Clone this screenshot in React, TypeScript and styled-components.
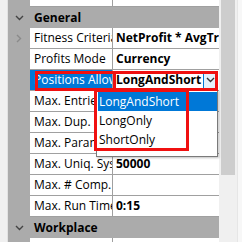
import styled, { createGlobalStyle } from 'styled-components';

const GlobalStyle = createGlobalStyle`
  html, body {
    margin: 0;
    padding: 0;
    background: #f0f0f0;
  }
`;

const Page = styled.div`
  position: relative;
  display: flex;
  width: 242px;
  height: 242px;
  overflow: hidden;
  background: #f0f0f0;
  font-family: 'Open Sans', 'Liberation Sans', sans-serif;
  font-size: 12px;
  color: #000;
`;

const LeftEdge = styled.div`
  width: 7px;
  flex: none;
  background: #f0f0f0;
  border-right: 1px solid #e2e2e2;
`;

const Grid = styled.div`
  width: 211px;
  flex: none;
  margin-top: -14px;
  display: flex;
  flex-direction: column;
  background: #ababab;
`;

const Row = styled.div`
  display: flex;
  height: 21px;
  flex: none;
`;

const Gutter = styled.div`
  width: 22px;
  flex: none;
  display: flex;
  align-items: center;
  justify-content: center;
  background: #ababab;
`;

const Cells = styled.div`
  flex: 1;
  display: flex;
  min-width: 0;
  background: #fff;
  border-bottom: 1px solid #a0a0a0;
`;

const Name = styled.div<{ $selected?: boolean }>`
  width: 83px;
  flex: none;
  padding-left: 4px;
  box-sizing: border-box;
  line-height: 20px;
  white-space: nowrap;
  overflow: hidden;
  border-right: 1px solid #a0a0a0;
  background: ${p => (p.$selected ? '#0078d7' : '#fff')};
  color: ${p => (p.$selected ? '#fff' : '#000')};
`;

const Value = styled.div`
  flex: 1;
  min-width: 0;
  display: flex;
  align-items: center;
  padding-left: 3px;
  font-weight: 700;
  line-height: 20px;
  white-space: nowrap;
  overflow: hidden;
`;

const ValueText = styled.span`
  flex: 1;
  overflow: hidden;
`;

const DropButton = styled.div`
  width: 12px;
  height: 17px;
  margin-right: 2px;
  flex: none;
  display: flex;
  align-items: center;
  justify-content: center;
  background: #e5f1fb;
  border: 1px solid #0078d7;
`;

const Category = styled.div`
  flex: 1;
  padding-left: 4px;
  line-height: 21px;
  font-weight: 700;
  background: #ababab;
`;

const Scrollbar = styled.div`
  width: 18px;
  flex: none;
  padding: 0 2px;
  box-sizing: border-box;
  background: #f0f0f0;
`;

const Thumb = styled.div`
  height: 175px;
  background: #cdcdcd;
`;

const RightEdge = styled.div`
  flex: 1;
  background: #f7f7f7;
  border-left: 1px solid #e6e6e6;
`;

const Popup = styled.div`
  position: absolute;
  left: 96px;
  top: 90px;
  width: 122px;
  height: 67px;
  box-sizing: border-box;
  padding: 1px 0 0 1px;
  background: #fff;
  border: 1px solid #7a7a7a;
  box-shadow: 1px 1px 2px rgba(0, 0, 0, 0.25);
`;

const Item = styled.div<{ $active?: boolean }>`
  height: 19px;
  line-height: 19px;
  padding-left: 1px;
  background: ${p => (p.$active ? '#0078d7' : 'transparent')};
  color: ${p => (p.$active ? '#fff' : '#000')};
`;

const Marker = styled.div<{ $x: number; $y: number; $w: number; $h: number }>`
  position: absolute;
  left: ${p => p.$x}px;
  top: ${p => p.$y}px;
  width: ${p => p.$w}px;
  height: ${p => p.$h}px;
  box-sizing: border-box;
  border: 3px solid #f01010;
  pointer-events: none;
`;

const ChevronDown = ({ color = '#444' }: { color?: string }) => (
  <svg width="9" height="6" viewBox="0 0 9 6">
    <path d="M1 1 L4.5 4.5 L8 1" fill="none" stroke={color} strokeWidth="1.4" />
  </svg>
);

const ChevronRight = () => (
  <svg width="6" height="9" viewBox="0 0 6 9">
    <path d="M1 1 L4.5 4.5 L1 8" fill="none" stroke="#8a8a8a" strokeWidth="1.4" />
  </svg>
);

type Prop = { name: string; value?: string; expandable?: boolean };

const generalProps: Prop[] = [
  { name: 'Fitness Criteria', value: 'NetProfit * AvgTrade', expandable: true },
  { name: 'Profits Mode', value: 'Currency' },
];

// values of the first three rows sit under the open drop-down list
const limitProps: Prop[] = [
  { name: 'Max. Entries per Day' },
  { name: 'Max. Dup. Systems' },
  { name: 'Max. Parameters' },
  { name: 'Max. Uniq. Systems', value: '50000' },
  { name: 'Max. # Comp.' },
  { name: 'Max. Run Time', value: '0:15' },
];

const PropRow = ({ name, value, expandable }: Prop) => (
  <Row>
    <Gutter>{expandable && <ChevronRight />}</Gutter>
    <Cells>
      <Name>{name}</Name>
      <Value>
        <ValueText>{value}</ValueText>
      </Value>
    </Cells>
  </Row>
);

export default function App() {
  return (
    <Page>
      <GlobalStyle />
      <LeftEdge />
      <Grid>
        <PropRow name="Min. Of Stress" />
        <Row>
          <Gutter>
            <ChevronDown />
          </Gutter>
          <Category>General</Category>
        </Row>
        {generalProps.map(p => (
          <PropRow key={p.name} {...p} />
        ))}
        <Row>
          <Gutter />
          <Cells>
            <Name $selected>Positions Allowed</Name>
            <Value>
              <ValueText>LongAndShort</ValueText>
              <DropButton>
                <ChevronDown color="#333" />
              </DropButton>
            </Value>
          </Cells>
        </Row>
        {limitProps.map(p => (
          <PropRow key={p.name} {...p} />
        ))}
        <Row>
          <Gutter>
            <ChevronDown />
          </Gutter>
          <Category>Workplace</Category>
        </Row>
        <PropRow name="Folder" />
      </Grid>
      <Scrollbar>
        <Thumb />
      </Scrollbar>
      <RightEdge />
      <Popup>
        <Item $active>LongAndShort</Item>
        <Item>LongOnly</Item>
        <Item>ShortOnly</Item>
      </Popup>
      <Marker $x={35} $y={71} $w={183} $h={20} />
      <Marker $x={113} $y={71} $w={105} $h={20} />
      <Marker $x={94} $y={89} $w={95} $h={62} />
    </Page>
  );
}
